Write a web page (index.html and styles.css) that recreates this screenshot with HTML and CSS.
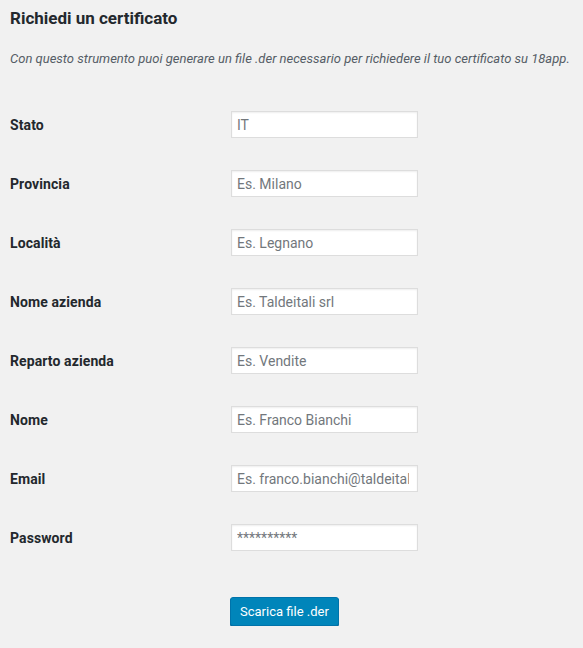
FILE: index.html
```html
<!DOCTYPE html>
<html lang="it">
<head>
<meta charset="utf-8">
<title>Richiedi un certificato</title>
<link rel="stylesheet" href="styles.css">
</head>
<body>
<div class="wrap">
  <h2 class="title">Richiedi un certificato</h2>
  <p class="description">Con questo strumento puoi generare un file .der necessario per richiedere il tuo certificato su 18app.</p>
  <form class="form-table">
    <label class="label" for="f1">Stato</label>
    <div class="cell"><input class="field" id="f1" type="text" placeholder="IT"></div>
    <label class="label" for="f2">Provincia</label>
    <div class="cell"><input class="field" id="f2" type="text" placeholder="Es. Milano"></div>
    <label class="label" for="f3">Località</label>
    <div class="cell"><input class="field" id="f3" type="text" placeholder="Es. Legnano"></div>
    <label class="label" for="f4">Nome azienda</label>
    <div class="cell"><input class="field" id="f4" type="text" placeholder="Es. Taldeitali srl"></div>
    <label class="label" for="f5">Reparto azienda</label>
    <div class="cell"><input class="field" id="f5" type="text" placeholder="Es. Vendite"></div>
    <label class="label" for="f6">Nome</label>
    <div class="cell"><input class="field" id="f6" type="text" placeholder="Es. Franco Bianchi"></div>
    <label class="label" for="f7">Email</label>
    <div class="cell"><input class="field" id="f7" type="text" placeholder="Es. franco.bianchi@taldeitali.it"></div>
    <label class="label" for="f8">Password</label>
    <div class="cell"><input class="field" id="f8" type="password" placeholder="**********"></div>
    <div class="submit-row"><button type="button" class="button-primary">Scarica file .der</button></div>
  </form>
</div>
</body>
</html>
```
FILE: styles.css
```css
html, body {
  margin: 0;
  padding: 0;
  background: #f1f1f1;
}
body {
  font-family: Roboto, "Liberation Sans", sans-serif;
  color: #23282d;
  font-size: 14px;
}
.wrap {
  padding: 0 10px;
}
.title {
  margin: 0;
  padding-top: 8px;
  font-size: 17px;
  line-height: 20px;
  font-weight: 700;
  color: #23282d;
}
.description {
  margin: 23px 0 0;
  font-size: 13px;
  line-height: 16px;
  font-style: italic;
  color: #555d66;
}
.form-table {
  margin-top: 28px;
  display: grid;
  grid-template-columns: 221px 187px;
  grid-auto-rows: 59px;
  align-items: center;
}
.label {
  font-weight: 700;
  font-size: 14px;
  letter-spacing: 0.1px;
  color: #23282d;
}
.cell {
  display: flex;
  align-items: center;
}
.field {
  box-sizing: border-box;
  width: 187px;
  height: 27px;
  margin: 0;
  padding: 0 8px 0 5px;
  border: 1px solid #ddd;
  background: #fff;
  box-shadow: inset 0 1px 2px rgba(0,0,0,.07);
  font-family: Roboto, "Liberation Sans", sans-serif;
  font-size: 14px;
  color: #32373c;
  outline: none;
}
.field::placeholder {
  color: #72777c;
  opacity: 1;
}
.submit-row {
  grid-column: 2;
  align-self: start;
  padding-top: 30px;
  margin-left: -1px;
}
.button-primary {
  box-sizing: border-box;
  height: 29px;
  padding: 0 9px 1px;
  background: #0085ba;
  border: 1px solid #0073aa;
  border-radius: 3px;
  box-shadow: 0 1px 0 #006799;
  color: #fff;
  font-family: Roboto, "Liberation Sans", sans-serif;
  font-size: 13px;
  cursor: pointer;
}
```
